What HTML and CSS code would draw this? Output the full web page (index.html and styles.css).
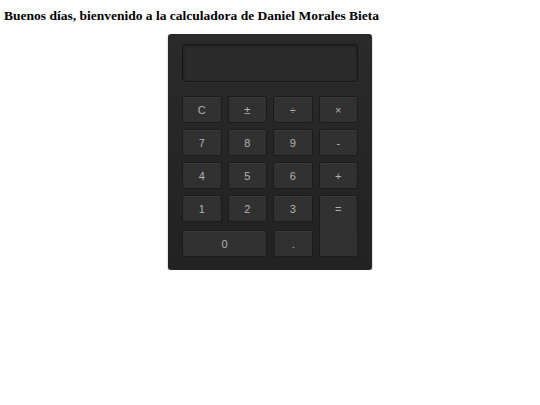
FILE: index.html
```html
<!DOCTYPE html>
<html>
<head>
<meta charset="utf-8">
<link rel="stylesheet" href="styles.css">
</head>
<body>
<h1 class="title">Buenos días, bienvenido a la calculadora de Daniel Morales Bieta</h1>
<div class="calc">
  <div class="display"></div>
  <div class="keys">
    <div class="key">C</div>
    <div class="key">±</div>
    <div class="key">÷</div>
    <div class="key">×</div>
    <div class="key">7</div>
    <div class="key">8</div>
    <div class="key">9</div>
    <div class="key">-</div>
    <div class="key">4</div>
    <div class="key">5</div>
    <div class="key">6</div>
    <div class="key">+</div>
    <div class="key">1</div>
    <div class="key">2</div>
    <div class="key">3</div>
    <div class="key key-eq">=</div>
    <div class="key key-zero">0</div>
    <div class="key key-dot">.</div>
  </div>
</div>
</body>
</html>
```
FILE: styles.css
```css
html, body {
  margin: 0;
  padding: 0;
  background: #fff;
}
body {
  padding: 8px 0 0;
}
.title {
  margin: 0 0 10px 4px;
  font-family: "Liberation Serif", "Times New Roman", serif;
  font-weight: bold;
  font-size: 13.5px;
  line-height: 16px;
  color: #000;
}
.calc {
  width: 176px;
  margin: 0 auto;
  padding: 10px 14px 13px 14px;
  background: linear-gradient(#2a2a2a, #222);
  border-radius: 3px;
  box-shadow: 0 1px 2px rgba(0,0,0,0.35);
}
.display {
  height: 36px;
  border: 1px solid #151515;
  border-radius: 3px;
  background: #2b2b2b;
  box-shadow: inset 0 1px 3px rgba(0,0,0,0.4), 0 1px 0 rgba(255,255,255,0.04);
  margin-bottom: 14px;
}
.keys {
  display: grid;
  grid-template-columns: repeat(4, 39.5px);
  grid-template-rows: 27px 27px 27px 27px 29px;
  column-gap: 6px;
  row-gap: 6px;
}
.key {
  background: #313131;
  border: 1px solid #1b1b1b;
  border-radius: 2px;
  box-shadow: inset 0 1px 0 rgba(255,255,255,0.05);
  color: #b4b4b4;
  font-family: "Liberation Sans", Arial, sans-serif;
  font-size: 11px;
  display: flex;
  align-items: center;
  justify-content: center;
  box-sizing: border-box;
}
.key-eq {
  grid-column: 4;
  grid-row: 4 / 6;
  align-items: flex-start;
  padding-top: 7px;
}
.key-zero {
  grid-column: 1 / 3;
  grid-row: 5;
  align-self: end;
  height: 27px;
}
.key-dot {
  grid-column: 3;
  grid-row: 5;
  align-self: end;
  height: 27px;
  margin-left: 1px;
}
```
